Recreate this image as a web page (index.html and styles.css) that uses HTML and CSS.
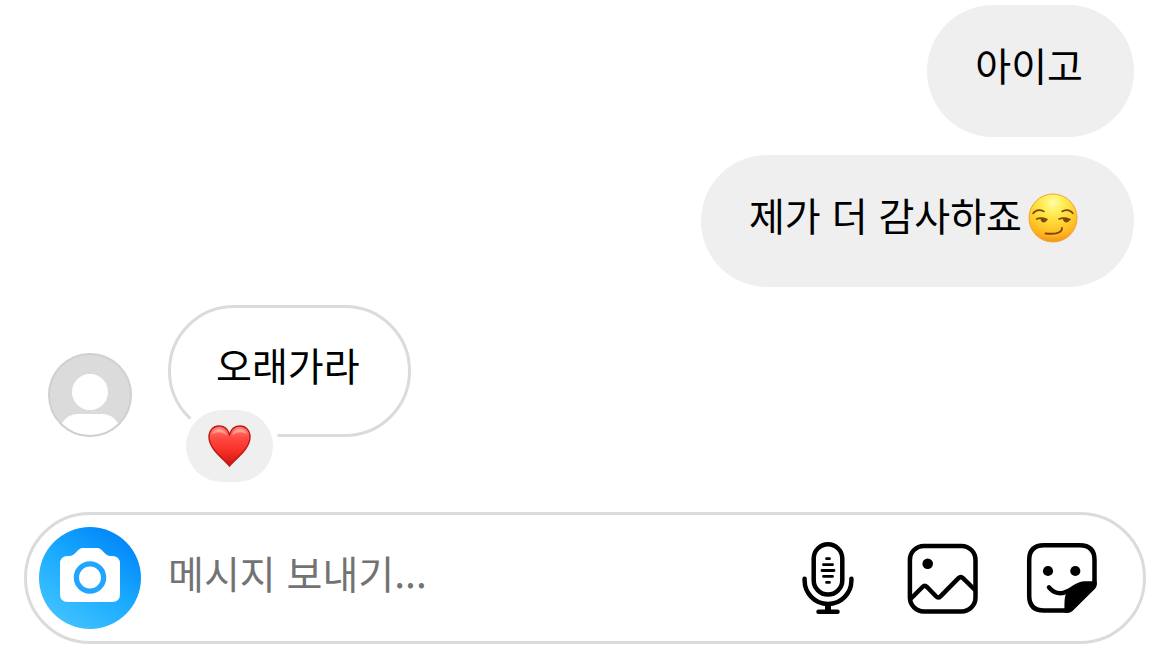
FILE: index.html
```html
<!DOCTYPE html>
<html lang="ko">
<head>
    <meta charset="UTF-8">
    <meta name="viewport" content="width=device-width, initial-scale=1.0">
    <title>메시지</title>
    <link rel="stylesheet" href="styles.css">
</head>
<body>
    <main class="chat">
        <div class="bubble sent">아이고</div>
        <div class="bubble sent">제가 더 감사하죠<svg class="emoji" viewBox="0 0 50 50" role="img" aria-label="smirk">
                <defs>
                    <radialGradient id="face" cx="50%" cy="18%" r="82%">
                        <stop offset="0" stop-color="#fffca8"/>
                        <stop offset="0.25" stop-color="#ffef5a"/>
                        <stop offset="0.55" stop-color="#ffd531"/>
                        <stop offset="0.85" stop-color="#ffb31f"/>
                        <stop offset="1" stop-color="#f0931a"/>
                    </radialGradient>
                </defs>
                <circle cx="25" cy="25" r="24" fill="url(#face)" stroke="#f0a52e" stroke-width="1"/>
                <g fill="none" stroke="#7a4a0c" stroke-linecap="round">
                    <path d="M5 20.500Q9 15 16 18.500M34 18.500Q41 15 45 20.500" stroke-width="1.500"/>
                    <path d="M8.500 26Q13 24 19 26.500M31 26Q36 24 42 26.500" stroke-width="1.600"/>
                    <path d="M17.500 40.500Q34 42 34 35" stroke-width="1.800"/>
                </g>
                <path d="M12.500 25.500L19 26.500Q18.500 29.500 15.500 29.500Q12.500 29 12.500 25.500ZM35 25.500L42 26.500Q41 29.500 38 29.500Q35 29 35 25.500Z" fill="#7a4a0c"/>
            </svg></div>

        <div class="row">
            <svg class="avatar" viewBox="0 0 84 84" role="img" aria-label="프로필">
                <clipPath id="round"><circle cx="42" cy="42" r="41"/></clipPath>
                <circle cx="42" cy="42" r="41.500" fill="#dbdbdb"/>
                <circle cx="42" cy="39" r="18" fill="#fff"/>
                <path d="M10 84L14 70Q20 61 30 61H54Q64 61 70 70L74 84Z" fill="#fff" clip-path="url(#round)"/>
                <circle cx="42" cy="42" r="41" fill="none" stroke="#d0d0d0" stroke-width="2"/>
            </svg>
            <div class="bubble received">
                오래가라
                <span class="reaction">
                    <svg class="heart" viewBox="0 0 43 42" role="img" aria-label="heart">
                        <defs>
                            <linearGradient id="red" x1="0" y1="0" x2="0" y2="1">
                                <stop offset="0" stop-color="#ff8277"/>
                                <stop offset="0.3" stop-color="#ff4a42"/>
                                <stop offset="0.65" stop-color="#f62d24"/>
                                <stop offset="1" stop-color="#c9150f"/>
                            </linearGradient>
                        </defs>
                        <path d="M21.500 41C15 33 1 24 1 12C1 5 5.500 1 11 1C16 1 20 4.500 21.500 9.500C23 4.500 27 1 32 1C37.500 1 42 5 42 12C42 24 28 33 21.500 41Z" fill="url(#red)" stroke="#bd1a14" stroke-width="1.400"/>
                        <path d="M4 9Q6 3.500 12 4Q17 5 19 10Q12 5 4 9ZM24 10Q26 4.500 31 4Q37 3.500 39 9Q31 5 24 10Z" fill="#ffb3ab" opacity="0.700"/>
                    </svg>
                </span>
            </div>
        </div>

        <form class="composer">
            <button class="camera" type="button" aria-label="카메라">
                <svg viewBox="0 0 102 102">
                    <path d="M29 29H30C37 29 38 21 44 21H58C64 21 65 29 72 29H73Q81 29 81 37V67Q81 75 73 75H29Q21 75 21 67V37Q21 29 29 29Z" fill="#fff"/>
                    <circle cx="51" cy="50.500" r="13.600" fill="#fff" stroke="#22a6fd" stroke-width="5.300"/>
                </svg>
            </button>
            <input class="message" type="text" placeholder="메시지 보내기..." aria-label="메시지 보내기">
            <button class="tool mic" type="button" aria-label="음성 메시지">
                <svg viewBox="0 0 60 72">
                    <g fill="none" stroke="#000" stroke-width="4.500" stroke-linecap="round">
                        <rect x="15.700" y="2.300" width="28.600" height="50.200" rx="14.300"/>
                        <path d="M6.600 36.700V38.500A23.400 23.400 0 0 0 53.400 38.500V36.700M20.500 69.700H39.500"/>
                        <path d="M30 63V69" stroke-width="6" stroke-linecap="butt"/>
                        <path d="M28.500 16.700H31.500M25.500 22.700H34.500M24 28.500H36M25.500 34.400H34.500M28.500 40.400H31.500" stroke-width="2.800"/>
                    </g>
                </svg>
            </button>
            <button class="tool" type="button" aria-label="사진">
                <svg viewBox="0 0 72 72">
                    <g fill="none" stroke="#000" stroke-width="4.500" stroke-linejoin="round">
                        <rect x="3.900" y="3.900" width="65.600" height="65.600" rx="14"/>
                        <path d="M4.500 57L16.500 45Q18.700 42.800 21 45L30 54.300Q32.200 56.500 34.500 54.300L52.500 36.200Q54.700 34 57 36.200L69 48"/>
                    </g>
                    <circle cx="21.700" cy="21.700" r="5.300"/>
                </svg>
            </button>
            <button class="tool" type="button" aria-label="스티커">
                <svg viewBox="0 0 72 72">
                    <g fill="none" stroke="#000" stroke-width="4.500" stroke-linecap="round">
                        <path d="M42 68.500H18Q3.200 68.500 3.200 53.700V18Q3.200 3.200 18 3.200H53.700Q68.500 3.200 68.500 18V42"/>
                        <path d="M23 45.300C28 51.500 35 52.500 41 49.500"/>
                    </g>
                    <path d="M38.500 70.700C38.500 62 38.200 56 40 51.800L37 49C44 47 50 39.300 59 39.300H70.700V42.500Q70.700 45 69 46.700L46.500 69Q44.800 70.700 42 70.700Z"/>
                    <circle cx="22" cy="29" r="5.100"/>
                    <circle cx="49.300" cy="29" r="5.100"/>
                </svg>
            </button>
        </form>
    </main>
</body>
</html>
```
FILE: styles.css
```css
body {
    margin: 0;
    background-color: #fff;
    color: #000;
    font-family: "Noto Sans CJK KR", sans-serif;
    font-size: 39px;
    line-height: 52px;
}
.chat {
    display: flex;
    flex-direction: column;
    gap: 18px;
    padding: 5px 24px 22px;
}
.bubble {
    position: relative;
    box-sizing: border-box;
    min-height: 132px;
    padding: 33px 51px 45px 48px;
    border-radius: 66px;
}
.sent {
    align-self: flex-end;
    margin-right: 12px;
    background-color: #efefef;
}
.row {
    display: flex;
    align-items: flex-end;
    gap: 36px;
    margin: 0 24px 57px;
}
.received {
    padding: 30px 48px 42px 45px;
    border: 3px solid #dbdbdb;
}
.emoji {
    width: 50px;
    height: 50px;
    margin: -6px 5px -6px 6px;
    vertical-align: -6px;
}
.avatar {
    width: 84px;
    height: 84px;
}
.reaction {
    position: absolute;
    left: 15px;
    bottom: -48px;
    display: flex;
    align-items: center;
    justify-content: center;
    width: 87px;
    height: 72px;
    border-radius: 36px;
    background-color: #efefef;
    box-shadow: 0 0 0 6px #fff;
}
.heart {
    width: 43px;
    height: 42px;
}
.composer {
    display: flex;
    align-items: center;
    box-sizing: border-box;
    height: 132px;
    padding: 0 45px 0 12px;
    border: 3px solid #dbdbdb;
    border-radius: 66px;
}
button {
    flex: none;
    padding: 0;
    border: none;
    background: none;
    cursor: pointer;
}
button svg,
.avatar,
.heart {
    display: block;
}
.camera {
    width: 102px;
    height: 102px;
    border-radius: 50%;
    background: linear-gradient(35deg, #43c3ff 10%, #1aabff 50%, #0084f8 90%);
}
.message {
    flex: 1;
    min-width: 0;
    height: 64px;
    margin: 0 27px;
    padding: 0 0 12px;
    border: none;
    outline: none;
    background: none;
    color: #000;
    font: inherit;
}
.message::placeholder {
    color: #737373;
    opacity: 1;
}
.tool {
    width: 72px;
    height: 72px;
    margin-left: 48px;
}
.mic {
    width: 60px;
    margin-left: 0;
}
```
